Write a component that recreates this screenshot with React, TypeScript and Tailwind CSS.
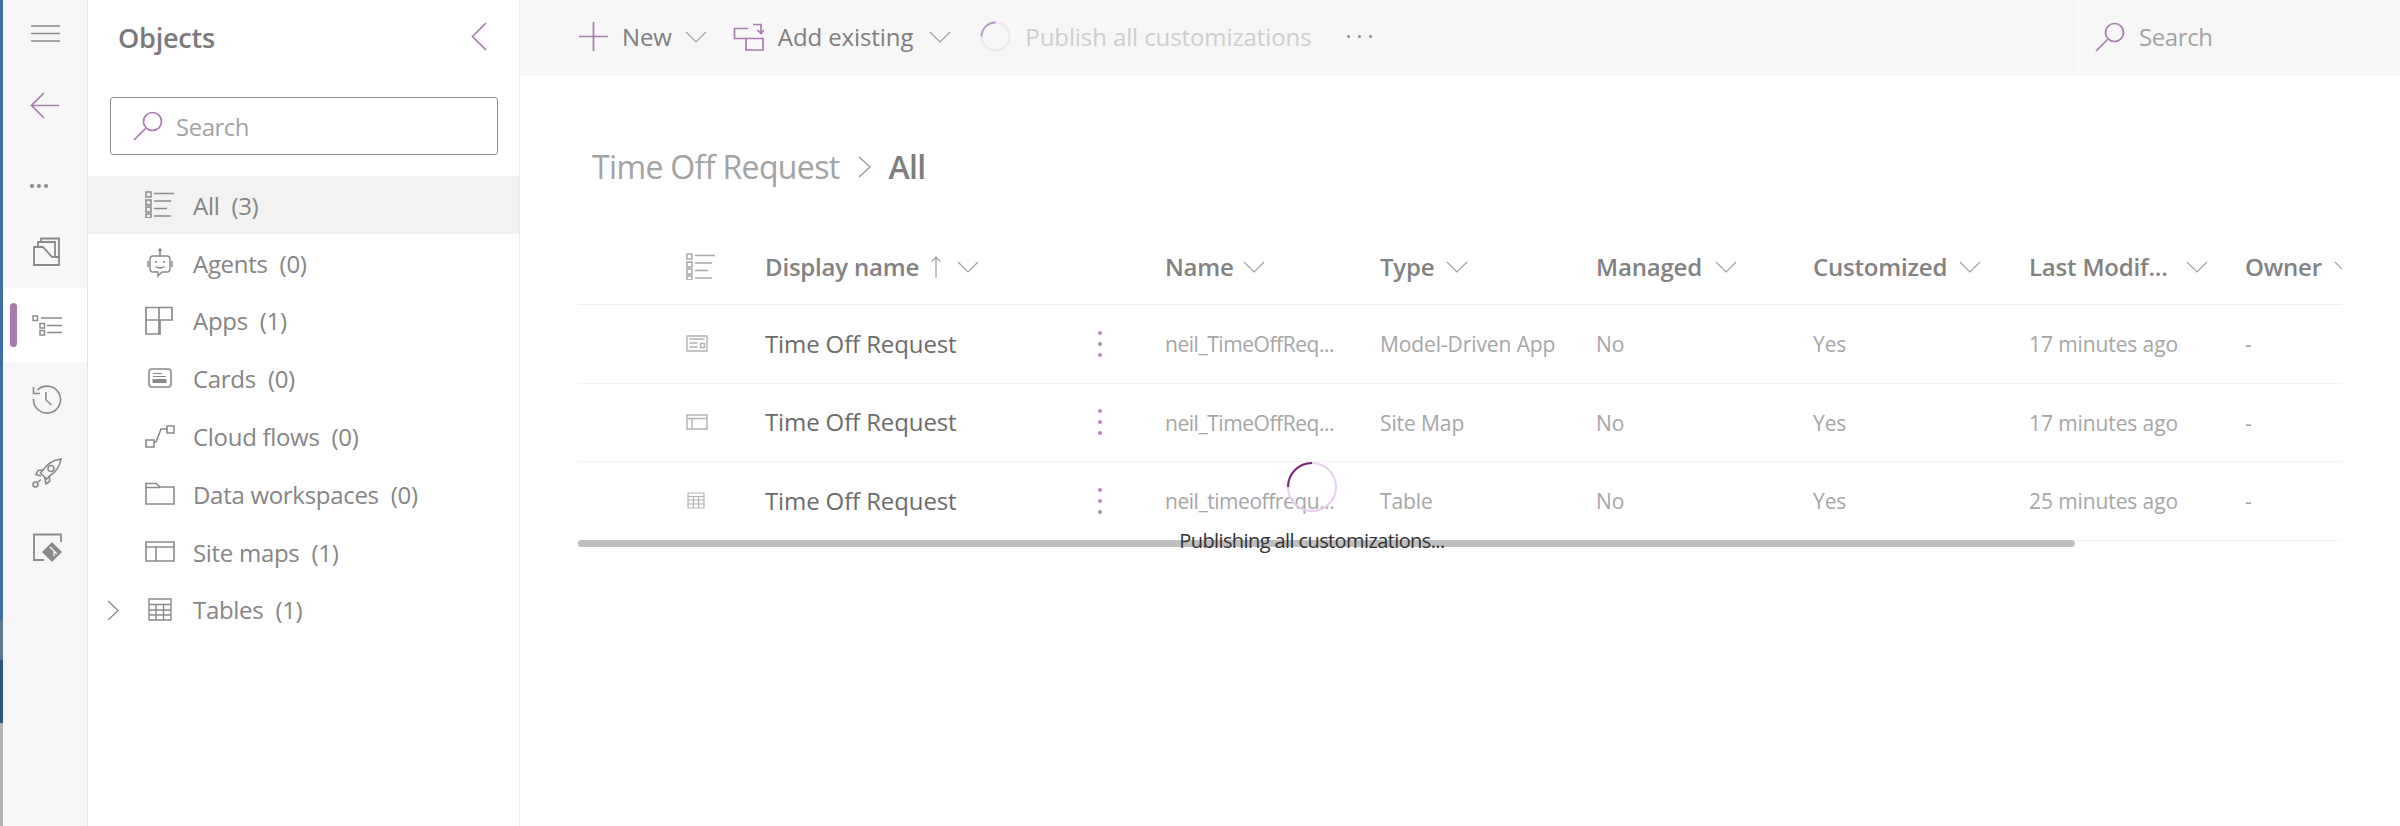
import React from "react";

type SP = { w: number; h: number; className?: string; children: React.ReactNode; sw?: number };
function Svg({ w, h, className, children, sw = 1.5 }: SP) {
  return (
    <svg width={w} height={h} viewBox={`0 0 ${w} ${h}`} fill="none" stroke="currentColor" strokeWidth={sw} className={className}>
      {children}
    </svg>
  );
}

const Chevron = ({ className = "text-[#9a9a9a]" }: { className?: string }) => (
  <Svg w={22} h={12} className={"shrink-0 " + className} sw={1.2}>
    <path d="M1 1L11 11L21 1" />
  </Svg>
);

const SearchIcon = () => (
  <Svg w={30} h={30} className="shrink-0 text-[#a87cad]" sw={1.7}>
    <circle cx="19.5" cy="10.5" r="9" />
    <path d="M12.5 17.5L1 29" />
  </Svg>
);

const ListIcon = ({ className = "text-[#8a8a8a]" }: { className?: string }) => (
  <Svg w={30} h={27} className={className} sw={1.6}>
    <path d="M1 1h5v5H1zM1 9h5v5H1zM1 16h5v5H1zM1 23h5v4H1z" strokeWidth={1.5} />
    <path d="M9 2.5H29M9 10H26M9 17.5H22M9 25H26" />
  </Svg>
);

const navIcons: Record<string, React.ReactNode> = {
  agent: (
    <Svg w={30} h={30} sw={1.5}>
      <path d="M8 8h14a3 3 0 0 1 3 3v10a3 3 0 0 1-3 3h-5l-4 4v-4H8a3 3 0 0 1-3-3V11a3 3 0 0 1 3-3z" />
      <path d="M15 2v6M3 13v6M27 13v6" />
      <circle cx="15" cy="2" r="1" fill="currentColor" />
      <circle cx="11" cy="14" r="1" fill="currentColor" stroke="none" />
      <circle cx="19" cy="14" r="1" fill="currentColor" stroke="none" />
      <path d="M10.5 18.5c2.5 2 6.5 2 9 0" />
    </Svg>
  ),
  apps: (
    <Svg w={30} h={29} sw={1.7}>
      <path d="M1 1.5H27V14H15V28H1ZM14 1.5V28M1 14H15" />
    </Svg>
  ),
  cards: (
    <Svg w={30} h={21} sw={1.6} className="ml-[3px]">
      <rect x="1" y="1" width="22" height="18" rx="3" />
      <path d="M5 5.5H14M5 8.5H18" strokeWidth={1.2} />
      <path d="M4.5 11h14v4h-14z" fill="currentColor" stroke="none" />
    </Svg>
  ),
  flows: (
    <Svg w={30} h={23} sw={1.6}>
      <path d="M1 15h8v7H1zM22 1h7v7h-7zM9 17h2L16 4h6" />
    </Svg>
  ),
  folder: (
    <Svg w={30} h={23} sw={1.6}>
      <path d="M1 22V1.5h10L15 5h14v17ZM1 5.5h14" />
    </Svg>
  ),
  site: (
    <Svg w={30} h={21} sw={1.6}>
      <path d="M1 1h28v19H1zM1 6h28M11 6v14" />
    </Svg>
  ),
  table: (
    <Svg w={24} h={23} sw={1.4} className="ml-[3px]">
      <path d="M1 1h22v21H1zM1 6.5h22M1 12h22M1 17h22M8 6.5V22M15.500 6.5V22" />
    </Svg>
  ),
};

const nav = [
  { label: "All", count: "(3)", icon: <ListIcon />, active: true },
  { label: "Agents", count: "(0)", icon: navIcons.agent },
  { label: "Apps", count: "(1)", icon: navIcons.apps },
  { label: "Cards", count: "(0)", icon: navIcons.cards },
  { label: "Cloud flows", count: "(0)", icon: navIcons.flows },
  { label: "Data workspaces", count: "(0)", icon: navIcons.folder },
  { label: "Site maps", count: "(1)", icon: navIcons.site },
  { label: "Tables", count: "(1)", icon: navIcons.table, expand: true },
];

const colTemplate = "grid grid-cols-[187px_400px_215px_216px_217px_216px_216px_100px]";

const rows = [
  {
    name: "neil_TimeOffReq...",
    type: "Model-Driven App",
    time: "17 minutes ago",
    icon: (
      <Svg w={22} h={17} sw={1.4}>
        <path d="M1 1h20v15H1zM3.500 4h15M3.500 8h8M3.500 12h8" />
        <path d="M14.500 8.500h4v4h-4z" />
      </Svg>
    ),
  },
  {
    name: "neil_TimeOffReq...",
    type: "Site Map",
    time: "17 minutes ago",
    icon: (
      <Svg w={22} h={16} sw={1.4}>
        <path d="M1 1h20v14H1zM1 4.500h20M6 4.500V15" />
      </Svg>
    ),
  },
  {
    name: "neil_timeoffrequ...",
    type: "Table",
    time: "25 minutes ago",
    icon: (
      <Svg w={18} h={17} sw={1.2} className="ml-px">
        <path d="M1 1h16v15H1zM1 4.500h16M1 8h16M1 12h16M6.500 4.500V16M11.500 4.500V16" />
      </Svg>
    ),
  },
];

const Kebab = () => (
  <div className="flex flex-col gap-[7px] shrink-0">
    <span className="block w-[4px] h-[4px] rounded-full bg-[#b48cb9]" />
    <span className="block w-[4px] h-[4px] rounded-full bg-[#b48cb9]" />
    <span className="block w-[4px] h-[4px] rounded-full bg-[#b48cb9]" />
  </div>
);

const Head = ({ label, gap = "ml-[12px]" }: { label: string; gap?: string }) => (
  <div className="flex items-center whitespace-nowrap">
    <span>{label}</span>
    <Chevron className={"text-[#a0a0a0] " + gap} />
  </div>
);

export default function App() {
  return (
    <div className="w-[2400px] h-[826px] flex overflow-hidden bg-white font-['Open_Sans',sans-serif] text-[#808080]">
      {/* window edge */}
      <div className="w-[3px] shrink-0 flex flex-col">
        <div className="h-[620px] bg-[#3f6d9f]" />
        <div className="h-[40px] bg-[#5b7893]" />
        <div className="h-[63px] bg-[#2f567f]" />
        <div className="flex-1 bg-[#b4b4b4]" />
      </div>

      {/* rail */}
      <div className="w-[85px] shrink-0 bg-[#f7f7f7] border-r border-[#e3e3e3] flex flex-col text-[#8a8a8a]">
        <div className="h-[66px] flex items-center pl-[28px]">
          <Svg w={29} h={17} sw={1.6}>
            <path d="M0 1H29M0 8.500H29M0 16H29" />
          </Svg>
        </div>
        <div className="h-[78px] flex items-center pl-[27px] text-[#a87cad]">
          <Svg w={30} h={27} sw={1.7}>
            <path d="M29 13.500H1.500M14 1L1.500 13.500L14 26" />
          </Svg>
        </div>
        <div className="h-[70px] pt-[40px] pl-[27px]">
          <div className="flex gap-[3px]">
            <span className="block w-[4px] h-[4px] rounded-full bg-[#8a8a8a]" />
            <span className="block w-[4px] h-[4px] rounded-full bg-[#8a8a8a]" />
            <span className="block w-[4px] h-[4px] rounded-full bg-[#8a8a8a]" />
          </div>
        </div>
        <div className="h-[74px] flex items-center pl-[30px]">
          <Svg w={27} h={29} sw={1.8}>
            <path d="M1 10H10L19 20H26V28H1Z" />
            <path d="M5 10V5H22V20" />
            <path d="M8 5V1.500H26V20" />
          </Svg>
        </div>
        <div className="h-[74px] flex items-center bg-white relative pl-[29px]">
          <span className="absolute left-[7px] top-[15px] w-[7px] h-[44px] rounded-full bg-[#a87cad]" />
          <Svg w={30} h={21} sw={1.5}>
            <path d="M1 1h4.500v4.500H1zM8 8.500h4.500V13H8zM8 15.500h4.500V20H8z" />
            <path d="M9 3H30M15 10.500H30M15 17.500H30" />
          </Svg>
        </div>
        <div className="h-[74px] flex items-center pl-[29px]">
          <Svg w={30} h={30} sw={1.6}>
            <path d="M5.500 6A13.500 13.500 0 1 1 1.500 15" />
            <path d="M1.500 3V9.500H8" />
            <path d="M14 8V16L19.500 21" />
          </Svg>
        </div>
        <div className="h-[74px] flex items-center pl-[29px]">
          <Svg w={30} h={30} sw={1.6}>
            <path d="M29 1C22 2 15 6 11 12L8.500 15L14.500 21L17.500 18C24 14 28 8 29 1Z" />
            <circle cx="19" cy="10.500" r="3" />
            <path d="M11 12L6 12.500L4 16.500L9 18M17.500 18L17.500 23.500L14 26L12.500 19" />
            <circle cx="3.500" cy="26.500" r="2.500" />
            <path d="M6 24L9 21.500" />
          </Svg>
        </div>
        <div className="h-[74px] flex items-center pl-[30px]">
          <Svg w={30} h={29} sw={1.8}>
            <path d="M28 9V1.500H1V27H11" />
            <path d="M19 9L29 19L19 29L9 19Z" fill="currentColor" stroke="none" />
            <path d="M17 14L21 18V23M21 18L24 21" stroke="#f7f7f7" strokeWidth={1.4} />
          </Svg>
        </div>
      </div>

      {/* objects */}
      <div className="w-[432px] shrink-0 border-r border-[#ececec] flex flex-col">
        <div className="h-[76px] flex items-center justify-between pl-[30px] pr-[32px]">
          <span className="text-[27px] font-semibold text-[#7a7a7a] tracking-[-0.2px]">Objects</span>
          <Svg w={16} h={29} className="text-[#a87cad] mb-[4px]" sw={1.7}>
            <path d="M15 1L1.500 14.500L15 28" />
          </Svg>
        </div>
        <div className="ml-[22px] mt-[21px] w-[388px] h-[58px] border border-[#8f8f8f] rounded-[3px] flex items-center pl-[22px] gap-[13px]">
          <SearchIcon />
          <span className="text-[24px] text-[#a3a3a3] tracking-[-0.5px] pt-px">Search</span>
        </div>
        <div className="mt-[21px] flex flex-col">
          {nav.map((n) => (
            <div key={n.label} className={"h-[57.8px] flex items-center relative pl-[57px] " + (n.active ? "bg-[#f3f2f1]" : "")}>
              {n.expand && (
                <Svg w={12} h={21} className="absolute left-[19px] top-[19px] text-[#8a8a8a]" sw={1.3}>
                  <path d="M1 1L11 10.500L1 20" />
                </Svg>
              )}
              <div className="w-[48px] flex items-center text-[#8a8a8a]">{n.icon}</div>
              <span className="text-[24px] text-[#858585] tracking-[-0.3px] whitespace-nowrap pt-[2px]">
                {n.label}
                <span className="ml-[12px]">{n.count}</span>
              </span>
            </div>
          ))}
        </div>
      </div>

      {/* main */}
      <div className="flex-1 min-w-0 flex flex-col relative">
        <div className="h-[76px] shrink-0 bg-[#f7f7f7] flex items-center pb-[3px]">
          <div className="flex-1 flex items-center pl-[59px] text-[24px] tracking-[-0.1px] whitespace-nowrap">
            <Svg w={29} h={29} className="text-[#a87cad]" sw={1.7}>
              <path d="M14.500 0V29M0 14.500H29" />
            </Svg>
            <span className="ml-[14px] text-[#7e7e7e]">New</span>
            <Chevron className="ml-[13px] text-[#a0a0a0]" />
            <Svg w={31} h={28} className="ml-[26px] text-[#a87cad]" sw={1.7}>
              <path d="M15 5.500H1.500V15.500H13" />
              <path d="M13 15.500H30V27H13Z" />
              <path d="M20 1.500H28V10M24.500 7L28 10.500L31 7" />
            </Svg>
            <span className="ml-[14px] text-[#7e7e7e]">Add existing</span>
            <Chevron className="ml-[16px] text-[#a0a0a0]" />
            <svg width="31" height="31" viewBox="0 0 31 31" fill="none" className="ml-[29px]">
              <circle cx="15.500" cy="15.500" r="14" stroke="#f2e3f4" strokeWidth="1.8" />
              <path d="M1.500 15.500A14 14 0 0 1 15.500 1.500" stroke="#b79ac0" strokeWidth="1.8" />
            </svg>
            <span className="ml-[14px] text-[#cecece]">Publish all customizations</span>
            <div className="ml-[35px] flex gap-[8px]">
              <span className="block w-[3px] h-[3px] rounded-full bg-[#8a8a8a]" />
              <span className="block w-[3px] h-[3px] rounded-full bg-[#8a8a8a]" />
              <span className="block w-[3px] h-[3px] rounded-full bg-[#8a8a8a]" />
            </div>
          </div>
          <div className="w-[327px] h-full border-l border-[#efefef] flex items-center pl-[21px] gap-[14px]">
            <SearchIcon />
            <span className="text-[24px] text-[#a3a3a3] tracking-[-0.4px]">Search</span>
          </div>
        </div>

        <div className="pl-[72px] h-[64px] mt-[59px] flex items-center text-[32px] tracking-[-0.65px] whitespace-nowrap shrink-0 mb-[30px] text-[#a3a3a3]">
          <span>Time Off Request</span>
          <Svg w={13} h={22} className="ml-[18px] text-[#9a9a9a]" sw={1.3}>
            <path d="M1 1L12 11L1 21" />
          </Svg>
          <span className="ml-[18px] font-semibold text-[#7d7d7d]">All</span>
        </div>

        <div className="ml-[58px] w-[1764px] overflow-hidden shrink-0">
          <div className={colTemplate + " h-[76px] items-center text-[24px] font-semibold tracking-[-0.2px] text-[#828282] border-b border-[#f0f0f0]"}>
            <div className="pl-[108px]">
              <ListIcon className="text-[#a8a8a8]" />
            </div>
            <div className="flex items-center">
              <span>Display name</span>
              <Svg w={10} h={22} className="ml-[12px] text-[#a0a0a0]" sw={1.2}>
                <path d="M5 22V1M1 5.500L5 1L9 5.500" />
              </Svg>
              <Chevron className="ml-[16px] text-[#a0a0a0]" />
            </div>
            <Head label="Name" gap="ml-[9px]" />
            <Head label="Type" />
            <Head label="Managed" gap="ml-[13px]" />
            <Head label="Customized" />
            <Head label="Last Modif..." gap="ml-[18px]" />
            <Head label="Owner" />
          </div>
          {rows.map((r, i) => (
            <div key={i} className={colTemplate + " h-[78.5px] items-center text-[21px] tracking-[-0.1px] text-[#a6a6a6] border-b border-[#f3f3f3]"}>
              <div className="pl-[108px] flex items-center text-[#b3b3b3]">{r.icon}</div>
              <div className="flex items-center justify-between pr-[63px]">
                <span className="text-[24px] text-[#6b6b6b] tracking-[-0.12px]">Time Off Request</span>
                <Kebab />
              </div>
              <div className="whitespace-nowrap pt-[2px] tracking-[-0.45px]">{r.name}</div>
              <div className="whitespace-nowrap pt-[2px]">{r.type}</div>
              <div className="pt-[2px]">No</div>
              <div className="pt-[2px]">Yes</div>
              <div className="whitespace-nowrap pt-[2px]">{r.time}</div>
              <div className="pt-[2px]">-</div>
            </div>
          ))}
        </div>
        <div className="ml-[58px] w-[1497px] h-[7px] rounded-full bg-[#bfbfbf] shrink-0 -mt-px" />

        {/* loading overlay */}
        <div className="absolute left-[660px] top-[462px] w-[264px] flex flex-col items-center">
          <svg width="50" height="50" viewBox="0 0 50 50" fill="none">
            <circle cx="25" cy="25" r="24" stroke="#e6d0eb" strokeWidth="2" />
            <path d="M1 25A24 24 0 0 1 25 1" stroke="#742774" strokeWidth="2" />
          </svg>
          <span className="mt-[15px] leading-[28px] text-[20px] tracking-[-0.6px] text-[#333333] whitespace-nowrap">Publishing all customizations...</span>
        </div>
      </div>
    </div>
  );
}
